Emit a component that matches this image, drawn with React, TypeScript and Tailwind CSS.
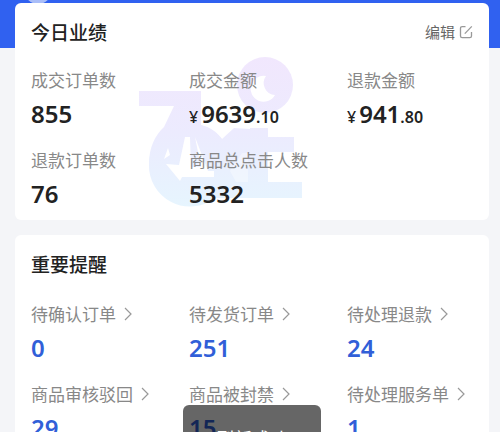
import type { ReactNode } from "react";

type Stat = {
  label: string;
  value: string;
  money?: boolean;
  cents?: string;
};

const todayStats: Stat[] = [
  { label: "成交订单数", value: "855" },
  { label: "成交金额", value: "9639", money: true, cents: ".10" },
  { label: "退款金额", value: "941", money: true, cents: ".80" },
  { label: "退款订单数", value: "76" },
  { label: "商品总点击人数", value: "5332" },
];

const reminders: Stat[] = [
  { label: "待确认订单", value: "0" },
  { label: "待发货订单", value: "251" },
  { label: "待处理退款", value: "24" },
  { label: "商品审核驳回", value: "29" },
  { label: "商品被封禁", value: "15" },
  { label: "待处理服务单", value: "1" },
];

function EditIcon() {
  return (
    <svg viewBox="0 0 14 14" className="size-[14px]" fill="none" stroke="#999" strokeWidth="1.3" aria-hidden="true">
      <path d="M6.5 1.6H3.2Q1.5 1.6 1.5 3.3V11Q1.5 12.6 3.2 12.6H10.8Q12.5 12.6 12.5 11V7" />
      <path d="M5.8 8.6L12.8 1.4" />
    </svg>
  );
}

function ChevronIcon() {
  return (
    <svg viewBox="0 0 8 14" className="h-[14px] w-2" fill="none" stroke="#999" strokeWidth="1.2" aria-hidden="true">
      <path d="M1 1L7 7L1 13" />
    </svg>
  );
}

function Watermark() {
  return (
    <svg viewBox="0 0 168 152" className="h-[152px] w-[168px]" aria-hidden="true">
      <defs>
        <linearGradient id="mark" x1="0" y1="0" x2="0" y2="152" gradientUnits="userSpaceOnUse">
          <stop offset="0" stopColor="#f1e7fd" />
          <stop offset="0.5" stopColor="#ecebfe" />
          <stop offset="1" stopColor="#e6f5fe" />
        </linearGradient>
      </defs>
      <g fill="url(#mark)">
        <circle cx="127" cy="28" r="28" />
        <path d="M1 34H63V68C72 70 79 75 84 82L96 71L112 72V71H130V80H156V95H130V125H164V141H77A41 41 0 0 1 11 107C11 91 17 78 26 70L36 49H1Z" />
        <path d="M11 107A41 41 0 0 0 84 131V82A41 41 0 0 0 11 107Z" />
      </g>
      <g fill="#fff">
        <path d="M128 19A13 13 0 1 0 137 38A12 12 0 0 1 128 19Z" />
        <path d="M47 80H52L53 110H63L57 80L70 114H76V120H44L42 124L28 107L41 108Z" />
        <path d="M30 91L26 102L32 98Z" />
        <path d="M110 96V125H98L92 114L104 96Z" fillOpacity="0.35" />
      </g>
    </svg>
  );
}

function Card({ title, action, children }: { title: string; action?: ReactNode; children: ReactNode }) {
  return (
    <section className="relative rounded-md bg-white px-4 pt-[15px] pb-[10px]">
      <div className="flex h-7 items-center justify-between">
        <h2 className="text-[19px] font-medium text-[#222]">{title}</h2>
        {action}
      </div>
      {children}
    </section>
  );
}

export default function App() {
  return (
    <main className="relative h-screen overflow-hidden bg-[#f4f5f8] font-['Noto_Sans_CJK_SC',sans-serif]">
      {/* blue header strip behind the first card */}
      <div className="absolute inset-x-0 top-0 h-12 overflow-hidden bg-[#3061f0]">
        <div className="absolute -top-6 left-6 size-7 rounded-full bg-[#a9bdf8]" />
      </div>

      <div className="relative flex flex-col gap-[15px] pt-[3px] pr-[11px] pl-[15px]">
        <Card
          title="今日业绩"
          action={
            <button type="button" className="flex items-center gap-1 text-[15px] text-[#666]">
              编辑
              <EditIcon />
            </button>
          }
        >
          <div className="absolute top-[54px] left-[123px]">
            <Watermark />
          </div>
          <dl className="relative mt-[22px] grid grid-cols-[158px_158px_1fr] gap-y-[18px]">
            {todayStats.map((item) => (
              <div key={item.label}>
                <dt className="text-[17px] leading-6 whitespace-nowrap text-[#888]">{item.label}</dt>
                <dd className="mt-[6px] flex items-baseline font-['Noto_Sans',sans-serif] text-[24px] leading-8 font-semibold text-[#222]">
                  {item.money && <span className="mr-[3px] text-[16px] leading-4 font-medium">¥</span>}
                  {item.value}
                  {item.cents && <span className="text-[16px] leading-4">{item.cents}</span>}
                </dd>
              </div>
            ))}
          </dl>
        </Card>

        <Card title="重要提醒">
          <div className="mt-6 grid grid-cols-[158px_158px_1fr] gap-y-[18px]">
            {reminders.map((item) => (
              <a key={item.label} href="#" className="block">
                <span className="flex items-center gap-2 text-[17px] leading-6 whitespace-nowrap text-[#888]">
                  {item.label}
                  <ChevronIcon />
                </span>
                <span className="mt-[6px] block font-['Noto_Sans',sans-serif] text-[24px] leading-8 font-semibold text-[#315fd8]">
                  {item.value}
                </span>
              </a>
            ))}
          </div>
        </Card>
      </div>

      {/* toast */}
      <div
        role="status"
        className="absolute -bottom-8 left-1/2 ml-[2px] -translate-x-1/2 rounded-md bg-black/60 px-[33px] pt-[21px] pb-[14px] text-[18px] leading-6 whitespace-nowrap text-white"
      >
        刷新成功
      </div>
    </main>
  );
}
